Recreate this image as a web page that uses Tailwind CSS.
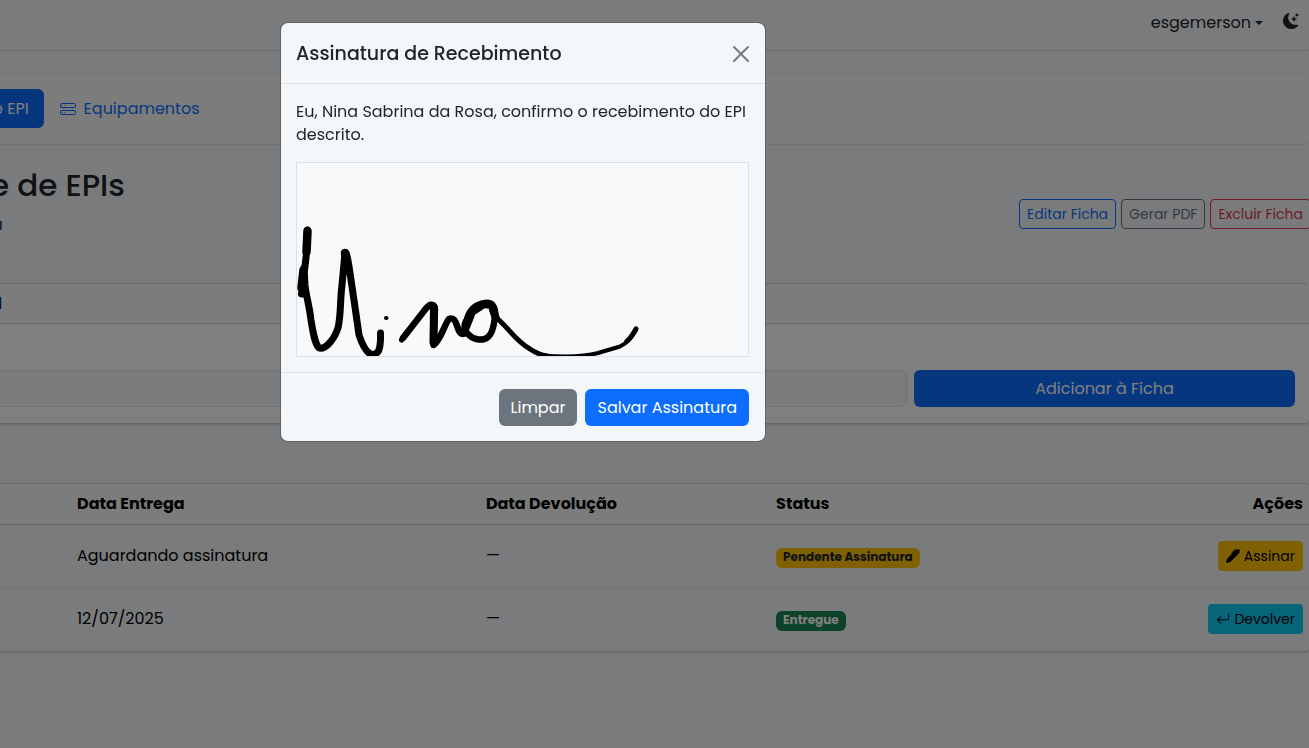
<!DOCTYPE html>
<html lang="pt-BR">
<head>
<meta charset="utf-8">
<title>Controle de EPIs</title>
<script src="https://cdn.jsdelivr.net/npm/@tailwindcss/browser@4"></script>
</head>
<body class="min-h-screen overflow-hidden bg-[#f4f7fa] font-[Poppins,sans-serif] text-base leading-6 text-[#212529]">

<header class="flex h-[50px] items-center justify-end gap-5 border-b border-[#e4e7ea] pr-2.5 pb-1 shadow-sm">
  <button class="flex items-center gap-1">esgemerson
    <svg class="h-1 w-2" viewBox="0 0 8 4" fill="currentColor" aria-hidden="true"><path d="M0 0h8L4 4z"/></svg>
  </button>
  <button aria-label="Alternar tema" class="pb-1">
    <svg class="size-4" viewBox="0 0 16 16" fill="currentColor" aria-hidden="true"><path d="M6 .278a.77.77 0 0 1 .08.858 7.2 7.2 0 0 0-.878 3.46c0 4.021 3.278 7.277 7.318 7.277q.792-.001 1.533-.16a.79.79 0 0 1 .81.316.73.73 0 0 1-.031.893A8.35 8.35 0 0 1 8.344 16C3.734 16 0 12.286 0 7.71 0 4.266 2.114 1.312 5.124.06A.75.75 0 0 1 6 .278"/><path d="M10.794 3.148a.217.217 0 0 1 .412 0l.387 1.162c.173.518.579.924 1.097 1.097l1.162.387a.217.217 0 0 1 0 .412l-1.162.387a1.73 1.73 0 0 0-1.097 1.097l-.387 1.162a.217.217 0 0 1-.412 0l-.387-1.162A1.73 1.73 0 0 0 9.31 6.593l-1.162-.387a.217.217 0 0 1 0-.412l1.162-.387a1.73 1.73 0 0 0 1.097-1.097zM13.863.099a.145.145 0 0 1 .274 0l.258.774c.115.346.386.617.732.732l.774.258a.145.145 0 0 1 0 .274l-.774.258a1.16 1.16 0 0 0-.732.732l-.258.774a.145.145 0 0 1-.274 0l-.258-.774a1.16 1.16 0 0 0-.732-.732l-.774-.258a.145.145 0 0 1 0-.274l.774-.258c.346-.115.617-.386.732-.732z"/></svg>
  </button>
</header>

<main class="-mr-0.5 -ml-2.5 pt-[23px]">
  <nav class="flex items-center rounded-r-lg border border-[#e3e6ea] bg-[#f9f9f8] pt-[15px] pb-4">
    <a href="#ficha" class="rounded-md bg-[#0d6efd] py-[7px] pr-[15px] pl-0.5 leading-[25px] text-white">e EPI</a>
    <a href="#equipamentos" class="flex items-center gap-2 px-4 text-[#0d6efd]">
      <svg class="size-4" viewBox="0 0 16 16" fill="currentColor" aria-hidden="true"><path d="M14 10a1 1 0 0 1 1 1v1a1 1 0 0 1-1 1H2a1 1 0 0 1-1-1v-1a1 1 0 0 1 1-1zM2 9a2 2 0 0 0-2 2v1a2 2 0 0 0 2 2h12a2 2 0 0 0 2-2v-1a2 2 0 0 0-2-2z"/><path d="M5 11.5a.5.5 0 1 1-1 0 .5.5 0 0 1 1 0m-2 0a.5.5 0 1 1-1 0 .5.5 0 0 1 1 0M14 3a1 1 0 0 1 1 1v1a1 1 0 0 1-1 1H2a1 1 0 0 1-1-1V4a1 1 0 0 1 1-1zM2 2a2 2 0 0 0-2 2v1a2 2 0 0 0 2 2h12a2 2 0 0 0 2-2V4a2 2 0 0 0-2-2z"/><path d="M5 4.5a.5.5 0 1 1-1 0 .5.5 0 0 1 1 0m-2 0a.5.5 0 1 1-1 0 .5.5 0 0 1 1 0"/></svg>
      Equipamentos
    </a>
  </nav>

  <section class="mt-5 flex items-end justify-between">
    <div>
      <h1 class="text-[31px] leading-10 font-medium">e de EPIs</h1>
      <p class="pt-2 pl-0.5 text-base leading-6 font-medium text-[#42474c]">a</p>
    </div>
    <div class="flex gap-[5px] pb-2 text-sm leading-5">
      <button class="rounded border border-[#0d6efd] px-[7px] py-1 text-[#0d6efd]">Editar Ficha</button>
      <button class="rounded border border-[#6c757d] px-[7px] py-1 text-[#6c757d]">Gerar PDF</button>
      <button class="rounded border border-[#dc3545] px-[7px] py-1 text-[#dc3545]">Excluir Ficha</button>
    </div>
  </section>

  <section class="mt-[46px] rounded-r-md border border-[#d0d1d2] bg-white shadow-sm">
    <h2 class="border-b border-[#d0d1d2] bg-[#f8f8f8] py-2 pl-[7px] leading-[23px] font-medium text-[#0a1f5c]">l</h2>
    <div class="flex gap-[7px] pt-[46px] pr-[15px] pb-4">
      <input aria-label="Equipamento" class="h-[37px] grow rounded-md border border-[#dee2e6] bg-[#f4f7fa] px-3">
      <button class="h-[37px] w-[381px] rounded-md bg-[#0d6efd] text-white">Adicionar à Ficha</button>
    </div>
  </section>

  <section class="mt-[59px] overflow-hidden rounded-r-md border border-[#d0d1d2] shadow-sm">
    <table class="w-full table-fixed text-left">
      <thead class="bg-[#f9f9f8] text-black">
        <tr class="h-10 border-b border-[#c9ccd0]">
          <th class="w-[78px]"></th>
          <th class="w-[31%] px-2 font-bold">Data Entrega</th>
          <th class="w-[22%] px-2 font-bold">Data Devolução</th>
          <th class="px-2 font-bold">Status</th>
          <th class="w-[12%] pr-[7px] text-right font-bold">Ações</th>
        </tr>
      </thead>
      <tbody class="text-black">
        <tr class="h-[63px] border-b border-[#dee2e6]">
          <td></td>
          <td class="px-2">Aguardando assinatura</td>
          <td class="px-2">—</td>
          <td class="px-2"><span class="mt-0.5 inline-block rounded-md bg-[#ffc107] px-[7px] pt-[3px] pb-[5px] text-xs leading-3 font-bold text-[#212529]">Pendente Assinatura</span></td>
          <td class="pr-[7px]"><button class="ml-auto flex items-center gap-1 rounded bg-[#ffc107] px-2 py-[5px] text-sm leading-5"><svg class="size-3.5" viewBox="0 0 16 16" fill="currentColor" aria-hidden="true"><path d="m13.498.795.149-.149a1.207 1.207 0 1 1 1.707 1.708l-.149.148a1.5 1.5 0 0 1-.059 2.059L4.854 14.854a.5.5 0 0 1-.233.131l-4 1a.5.5 0 0 1-.606-.606l1-4a.5.5 0 0 1 .131-.232l9.642-9.642a.5.5 0 0 0-.642.056L6.854 4.854a.5.5 0 1 1-.708-.708L9.44.854A1.5 1.5 0 0 1 11.5.796a1.5 1.5 0 0 1 1.998-.001"/></svg>Assinar</button></td>
        </tr>
        <tr class="h-[64px]">
          <td></td>
          <td class="px-2">12/07/2025</td>
          <td class="px-2">—</td>
          <td class="px-2"><span class="mt-0.5 inline-block rounded-md bg-[#198754] px-[7px] pt-[3px] pb-[5px] text-xs leading-3 font-bold text-white">Entregue</span></td>
          <td class="pr-[7px]"><button class="ml-auto flex items-center gap-1 rounded bg-[#0dcaf0] px-2 py-[5px] text-sm leading-5"><svg class="size-3.5" viewBox="0 0 16 16" fill="currentColor" aria-hidden="true"><path d="M14.5 1.5a.5.5 0 0 1 .5.5v4.8a2.5 2.5 0 0 1-2.5 2.5H2.707l3.347 3.346a.5.5 0 0 1-.708.708l-4.2-4.2a.5.5 0 0 1 0-.708l4-4a.5.5 0 1 1 .708.708L2.707 8.3H12.5A1.5 1.5 0 0 0 14 6.8V2a.5.5 0 0 1 .5-.5"/></svg>Devolver</button></td>
        </tr>
      </tbody>
    </table>
  </section>
</main>

<div class="fixed inset-0 flex items-start bg-black/50 pt-[22px] pl-[280px]">
  <div role="dialog" aria-modal="true" aria-labelledby="titulo" class="w-full max-w-[486px] rounded-lg border border-black/20 bg-[#f3f7fa] bg-clip-padding">
    <div class="flex items-center justify-between border-b border-[#dee2e6] pt-4 pr-4 pb-3.5 pl-[15px]">
      <h2 id="titulo" class="text-[19px] leading-[30px] font-medium">Assinatura de Recebimento</h2>
      <button aria-label="Fechar"><svg class="size-4" viewBox="0 0 16 16" fill="none" stroke="#7a7c7e" stroke-width="2" stroke-linecap="round" aria-hidden="true"><path d="M1 1l14 14M15 1 1 15"/></svg></button>
    </div>
    <div class="pt-4 pr-4 pb-[15px] pl-[15px]">
      <p class="pb-4 leading-[23px]">Eu, Nina Sabrina da Rosa, confirmo o recebimento do EPI descrito.</p>
      <div class="border border-[#dee2e6] bg-[#f8f9fb]">
        <svg class="block w-full" viewBox="297 163 451 193" fill="none" stroke="#000" stroke-linecap="round" stroke-linejoin="round" role="img" aria-label="Assinatura">
          <path stroke-width="7" d="M307.500 230C307.500 240 307 250 305.500 262L301.500 294M304 268L305 285C306 296 309 303 311 320C313 332 314.500 343 319 348C325 350 334 340 338 328C341 316 340 300 342 285L345 253C346 250 348 259 350 273L355 307L359 335C362 344 366 352 371 354.500C378 355 381 351 380.500 333"/>
          <path stroke-width="8.500" d="M307.500 231L306.500 252M303.500 270L301.500 288M345 253L347 270"/>
          <path stroke-width="4" d="M386 318h.500"/>
          <path stroke-width="5" d="M401.500 340L405 335"/>
          <path stroke-width="6.500" d="M403 338L424 311C429 304 434 302 435 309L433.500 345C440 342 445 323 449 319C458 315 456 334 463 334C466 334 465 326 467 319C470 309 477 304 485 303C492 302 496 307 495 316C494 326 492 334 488 337C482 342 472 339 468 334C464 330 464 325 466 321"/>
          <path stroke-width="8" d="M434 308L433.500 342M466 327L472 312L484 304L491 305M493 310L495.500 317"/>
          <path stroke-width="5" d="M494 316C507 325 514 340 530 349C536 353 541 355 547 356"/>
          <path stroke-width="4" d="M543 355.500C563 357 583 357 598 353L620 346.500C629 342 632 336 636 330"/>
          <path stroke-width="5" d="M627 341C631 338 633 334 636 329"/>
        </svg>
      </div>
    </div>
    <div class="flex justify-end gap-2 border-t border-[#dee2e6] pt-4 pr-4 pb-[15px] pl-[15px] text-white">
      <button class="h-[37px] rounded-md bg-[#6c757d] px-3">Limpar</button>
      <button class="h-[37px] rounded-md bg-[#0d6efd] px-3">Salvar Assinatura</button>
    </div>
  </div>
</div>
</body>
</html>
